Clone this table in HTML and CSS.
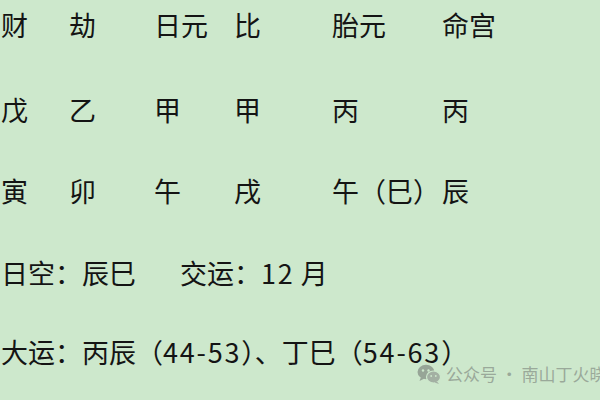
FILE: index.html
```html
<!DOCTYPE html>
<html lang="zh">
<head>
<meta charset="utf-8">
<link rel="stylesheet" href="styles.css">
</head>
<body>
<div class="page">
  <div class="grid r1">
    <span>财</span><span>劫</span><span>日元</span><span>比</span><span>胎元</span><span>命宫</span>
  </div>
  <div class="grid r2">
    <span>戊</span><span>乙</span><span>甲</span><span>甲</span><span>丙</span><span>丙</span>
  </div>
  <div class="grid r3">
    <span>寅</span><span>卯</span><span>午</span><span>戌</span><span>午（巳）</span><span>辰</span>
  </div>
  <div class="line r4">
    <span>日空：辰巳</span><span class="jy">交运：<span class="num">12</span> 月</span>
  </div>
  <div class="line r5">大运：丙辰（<span class="num">44-53</span>）、丁巳（<span class="num">54-63</span>）</div>
</div>
<div class="mark">
  <svg class="wx" width="24" height="20" viewBox="0 0 24 20">
    <ellipse cx="9" cy="8" rx="8.5" ry="7.2" fill="#97a597"/>
    <path d="M4 13 L2.5 17 L7.5 14.5 Z" fill="#97a597"/>
    <circle cx="6" cy="6.5" r="1.2" fill="#cde8cc"/>
    <circle cx="11.5" cy="6.5" r="1.2" fill="#cde8cc"/>
    <ellipse cx="16.5" cy="13" rx="7" ry="6" fill="#a3b0a3" stroke="#cde8cc" stroke-width="1.2"/>
    <path d="M20 17.5 L22 20 L17.5 18.5 Z" fill="#a3b0a3"/>
    <circle cx="14.2" cy="12" r="0.9" fill="#cde8cc"/>
    <circle cx="18.8" cy="12" r="0.9" fill="#cde8cc"/>
  </svg>
  <span class="mtxt">公众号 · 南山丁火晓</span>
</div>
</body>
</html>
```

FILE: styles.css
```css
html, body {
  margin: 0;
  padding: 0;
  background: #cde8cc;
  width: 600px;
  height: 400px;
  overflow: hidden;
}
body {
  position: relative;
  font-family: "Noto Sans CJK SC", "Noto Sans", sans-serif;
  color: #141414;
}
.page {
  display: flex;
  flex-direction: column;
  padding: 10px 0 0 1px;
  font-size: 27px;
  line-height: 30px;
  white-space: nowrap;
}
.r2 { margin-top: 55px; }
.r3 { margin-top: 51px; }
.r4 { margin-top: 52px; }
.r5 { margin-top: 49px; }
.grid {
  display: grid;
  grid-template-columns: 68px 85px 80px 98px 110px auto;
}
.line {
  display: flex;
}
.jy {
  margin-left: 44px;
}
.num {
  letter-spacing: 1.8px;
}
.mark {
  position: absolute;
  left: 417px;
  top: 364px;
  display: flex;
  align-items: center;
  gap: 5px;
  white-space: nowrap;
}
.wx {
  display: block;
}
.mtxt {
  font-size: 17px;
  line-height: 20px;
  color: #9aa99a;
}
```
